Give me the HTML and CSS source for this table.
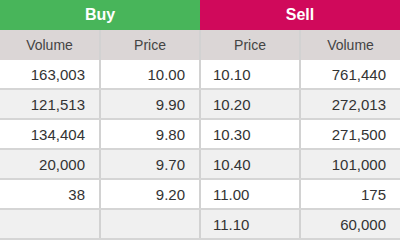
FILE: index.html
```html
<!DOCTYPE html>
<html lang="en">
<head>
  <meta charset="UTF-8" />
  <meta name="viewport" content="width=device-width, initial-scale=1.0"/>
  <title>Order Book</title>
  <link rel="stylesheet" href="styles.css">
</head>
<body>
  <table class="book">
    <colgroup>
      <col class="col"><col class="col"><col class="col"><col class="col">
    </colgroup>
    <thead>
      <tr class="side-row">
        <th colspan="2" class="side buy">Buy</th>
        <th colspan="2" class="side sell">Sell</th>
      </tr>
      <tr class="label-row">
        <th>Volume</th>
        <th>Price</th>
        <th>Price</th>
        <th>Volume</th>
      </tr>
    </thead>
    <tbody>
      <tr>
        <td class="num">163,003</td><td class="num">10.00</td>
        <td class="ask">10.10</td><td class="num">761,440</td>
      </tr>
      <tr>
        <td class="num">121,513</td><td class="num">9.90</td>
        <td class="ask">10.20</td><td class="num">272,013</td>
      </tr>
      <tr>
        <td class="num">134,404</td><td class="num">9.80</td>
        <td class="ask">10.30</td><td class="num">271,500</td>
      </tr>
      <tr>
        <td class="num">20,000</td><td class="num">9.70</td>
        <td class="ask">10.40</td><td class="num">101,000</td>
      </tr>
      <tr>
        <td class="num">38</td><td class="num">9.20</td>
        <td class="ask">11.00</td><td class="num">175</td>
      </tr>
      <tr>
        <td class="num"></td><td class="num"></td>
        <td class="ask">11.10</td><td class="num">60,000</td>
      </tr>
    </tbody>
  </table>
</body>
</html>
```

FILE: styles.css
```css
body {
  margin: 0;
  background: #fff;
  color: #333;
  font-family: 'Liberation Sans', Arial, sans-serif;
}

.book {
  width: 400px;
  border-collapse: collapse;
  table-layout: fixed;
}

.col {
  width: 100px;
}

.side {
  height: 30px;
  padding: 0;
  color: #fff;
  font-size: 16px;
  font-weight: bold;
  text-align: center;
}

.buy {
  background: #48b55a;
}

.sell {
  background: #d0095b;
}

.label-row th {
  height: 30px;
  padding: 0;
  background: #dbd6d6;
  color: #444;
  font-size: 14px;
  font-weight: normal;
  text-align: center;
}

.label-row th + th,
tbody td + td {
  border-left: 2px solid #d2d2d2;
}

tbody td {
  height: 28px;
  padding: 0 14px;
  font-size: 15px;
  border-bottom: 2px solid #d5d5d5;
}

tbody tr:nth-child(even) td {
  background: #f0f0f0;
}

.num {
  text-align: right;
}

.ask {
  text-align: left;
  padding-left: 12px;
}
```
